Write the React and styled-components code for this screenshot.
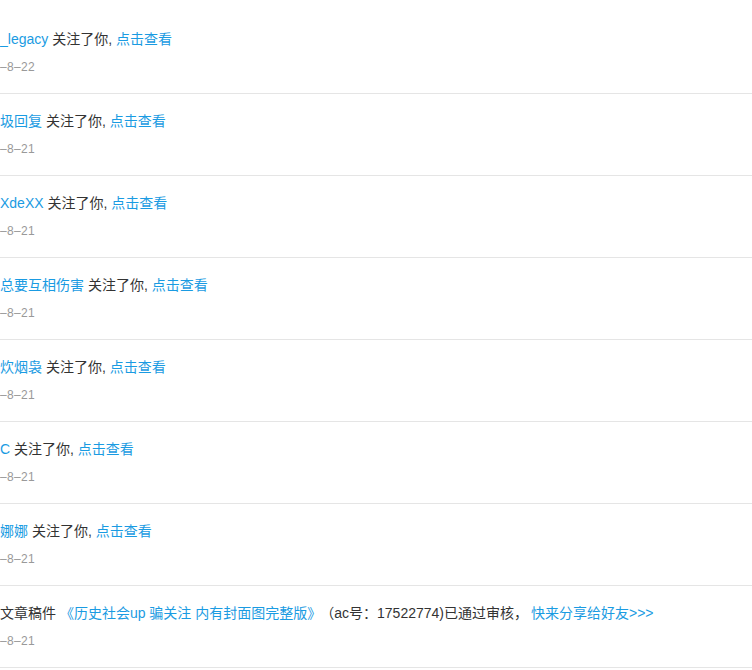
import styled, { createGlobalStyle } from 'styled-components'

const GlobalStyle = createGlobalStyle`
  html, body {
    margin: 0;
    padding: 0;
    background: #fff;
  }
  body {
    font-family: "Liberation Sans", "Noto Sans CJK SC", sans-serif;
    overflow: hidden;
  }
`

const notices = [
  { user: '_legacy', date: '–8–22' },
  { user: '圾回复', date: '–8–21' },
  { user: 'XdeXX', date: '–8–21' },
  { user: '总要互相伤害', date: '–8–21' },
  { user: '炊烟袅', date: '–8–21' },
  { user: 'C', date: '–8–21' },
  { user: '娜娜', date: '–8–21' },
]

const List = styled.ul`
  list-style: none;
  margin: 0;
  padding: 12px 0 0;
  width: 752px;
`

const Item = styled.li`
  padding: 17px 0 17px;
  border-bottom: 1px solid #e5e5e5;
`

const Line = styled.div`
  font-size: 14px;
  line-height: 20px;
  color: #333;
  white-space: nowrap;
`

const Blue = styled.a`
  color: #1a9be2;
  text-decoration: none;
  cursor: pointer;
  margin-left: ${(p) => p.$before || 0}px;
  margin-right: ${(p) => p.$after || 0}px;
`

const DateText = styled.div`
  margin-top: 9px;
  font-size: 12px;
  line-height: 18px;
  color: #999;
  letter-spacing: 0.3px;
`

export default function App() {
  return (
    <>
      <GlobalStyle />
      <List>
        {notices.map((n, i) => (
          <Item key={i}>
            <Line>
              <Blue>{n.user}</Blue> 关注了你, <Blue>点击查看</Blue>
            </Line>
            <DateText>{n.date}</DateText>
          </Item>
        ))}
        <Item>
          <Line>
            文章稿件 <Blue $after={6}>《历史社会up 骗关注 内有封面图完整版》</Blue>（ac号：17522774)已通过审核，
            <Blue $before={3}>快来分享给好友&gt;&gt;&gt;</Blue>
          </Line>
          <DateText>–8–21</DateText>
        </Item>
      </List>
    </>
  )
}
